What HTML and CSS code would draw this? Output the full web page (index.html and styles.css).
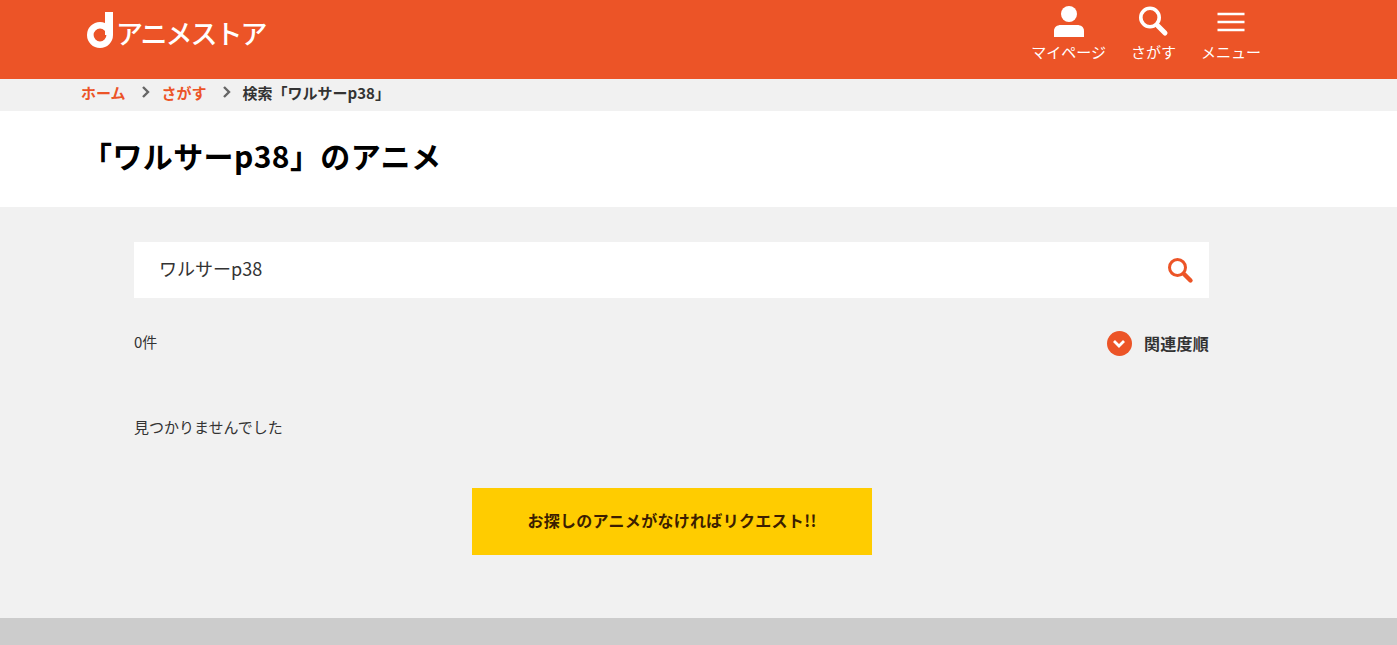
FILE: index.html
```html
<!DOCTYPE html>
<html lang="ja">
<head>
    <meta charset="UTF-8">
    <meta name="viewport" content="width=device-width, initial-scale=1.0">
    <title>「ワルサーp38」のアニメ</title>
    <link rel="stylesheet" href="styles.css">
</head>
<body>
    <!-- ヘッダー -->
    <header class="header">
        <a class="logo" href="#">
            <svg class="logo-mark" viewBox="0 0 26 36" width="26" height="36">
                <circle cx="13" cy="23" r="9.7" fill="none" stroke="#fff" stroke-width="6.6"/>
                <rect x="18" y="0" width="8" height="23" fill="#fff"/>
            </svg>
            <span class="logo-text">アニメストア</span>
        </a>
        <nav class="header-nav">
            <a class="nav-item nav-mypage" href="#">
                <svg class="nav-icon" viewBox="0 0 32 32" width="32" height="32">
                    <circle cx="16" cy="9" r="8" fill="#fff"/>
                    <path d="M1 32v-6c0-4 3-6 7-6h16c4 0 7 2 7 6v6z" fill="#fff"/>
                </svg>
                <span>マイページ</span>
            </a>
            <a class="nav-item nav-search" href="#">
                <svg class="nav-icon" viewBox="0 0 32 32" width="32" height="32">
                    <circle cx="13" cy="12.5" r="9.2" fill="none" stroke="#fff" stroke-width="3.6"/>
                    <path d="M21 21l7 7" fill="none" stroke="#fff" stroke-width="5" stroke-linecap="round"/>
                </svg>
                <span>さがす</span>
            </a>
            <a class="nav-item nav-menu" href="#">
                <svg class="nav-icon" viewBox="0 0 32 32" width="32" height="32">
                    <path d="M2.5 9h27M2.5 17h27M2.5 25h27" fill="none" stroke="#fff" stroke-width="2.6"/>
                </svg>
                <span>メニュー</span>
            </a>
        </nav>
    </header>

    <!-- パンくず -->
    <ul class="breadcrumb">
        <li class="crumb"><a href="#">ホーム</a></li>
        <li class="crumb-sep"><svg viewBox="0 0 10 14" width="10" height="14"><path d="M2 2l5 5-5 5" fill="none" stroke="#666" stroke-width="2.4"/></svg></li>
        <li class="crumb"><a href="#">さがす</a></li>
        <li class="crumb-sep"><svg viewBox="0 0 10 14" width="10" height="14"><path d="M2 2l5 5-5 5" fill="none" stroke="#666" stroke-width="2.4"/></svg></li>
        <li class="crumb current">検索「ワルサーp38」</li>
    </ul>

    <div class="title-area">
        <h1>「ワルサーp38」のアニメ</h1>
    </div>

    <!-- メイン -->
    <main class="main">
        <div class="search-box">
            <span class="search-word">ワルサーp38</span>
            <svg viewBox="0 0 28 28" width="28" height="28">
                <circle cx="11.5" cy="11.5" r="8" fill="none" stroke="#ec5427" stroke-width="3"/>
                <path d="M18 18l6.5 6.5" fill="none" stroke="#ec5427" stroke-width="4.4" stroke-linecap="round"/>
            </svg>
        </div>
        <div class="result-row">
            <span class="count">0件</span>
            <a class="sort" href="#">
                <span class="sort-icon">
                    <svg viewBox="0 0 14 10" width="14" height="10"><path d="M2 2l5 5 5-5" fill="none" stroke="#fff" stroke-width="2.8"/></svg>
                </span>
                <span class="sort-label">関連度順</span>
            </a>
        </div>
        <p class="no-result">見つかりませんでした</p>
        <a class="request-btn" href="#">お探しのアニメがなければリクエスト!!</a>
    </main>

    <footer class="footer"></footer>
</body>
</html>
```

FILE: styles.css
```css
body {
    margin: 0;
    background-color: #f1f1f1;
    color: #333;
    font-family: "Noto Sans CJK JP", "Open Sans", sans-serif;
    font-size: 15px;
    overflow: hidden;
}

a {
    color: inherit;
    text-decoration: none;
}

/* ヘッダー */
.header {
    display: flex;
    justify-content: space-between;
    height: 79px;
    padding: 0 136px 0 87px;
    background-color: #ec5427;
    color: #fff;
}

.logo {
    display: flex;
    align-items: flex-start;
    gap: 3px;
}

.logo-mark {
    margin-top: 12px;
}

.logo-text {
    margin-top: 13px;
    font-size: 27px;
    font-weight: 500;
    line-height: 40px;
    letter-spacing: -2px;
}

.header-nav {
    display: flex;
    gap: 25px;
}

.nav-item {
    display: flex;
    flex-direction: column;
    align-items: center;
    padding-top: 5px;
    font-size: 15px;
    line-height: 20px;
}

.nav-icon {
    margin-bottom: 5px;
}

/* パンくず */
.breadcrumb {
    display: flex;
    align-items: center;
    height: 26px;
    margin: 0;
    padding: 0 0 6px 81px;
    list-style: none;
    font-size: 15px;
    font-weight: 700;
    color: #333;
}

.crumb a {
    color: #ec5427;
}

.crumb-sep {
    display: flex;
    margin: 0 11px 0 15px;
}

/* タイトル */
.title-area {
    height: 96px;
    background-color: #fff;
    box-sizing: border-box;
    padding: 20px 0 0 82px;
}

h1 {
    margin: 0;
    color: #000;
    font-size: 30px;
    font-weight: 700;
    line-height: 48px;
    letter-spacing: 0.4px;
}

/* メイン */
.main {
    box-sizing: border-box;
    height: 411px;
    width: 1075px;
    margin-left: 134px;
    padding-top: 35px;
}

.search-box {
    display: flex;
    align-items: center;
    justify-content: space-between;
    height: 56px;
    padding: 0 15px 0 25px;
    background-color: #fff;
    font-size: 18px;
}

.search-word {
    margin-top: -4px;
}

.result-row {
    display: flex;
    justify-content: space-between;
    align-items: center;
    margin-top: 32px;
    height: 27px;
}

.count {
    margin-top: -5px;
}

.sort {
    display: flex;
    align-items: center;
    gap: 12px;
    font-weight: 700;
}

.sort-label {
    margin-top: -2px;
    font-size: 16px;
    line-height: 24px;
    letter-spacing: 0.25px;
}

.sort-icon {
    display: flex;
    align-items: center;
    justify-content: center;
    width: 25px;
    height: 25px;
    border-radius: 50%;
    background-color: #ec5427;
}

.no-result {
    margin: 56px 0 0;
    line-height: 28px;
}

.request-btn {
    display: block;
    width: 400px;
    height: 67px;
    margin: 47px 0 0 338px;
    background-color: #fc0;
    color: #3c1e00;
    font-size: 16px;
    font-weight: 700;
    letter-spacing: 0.3px;
    line-height: 64px;
    text-align: center;
}

.footer {
    height: 27px;
    background-color: #ccc;
}
```
